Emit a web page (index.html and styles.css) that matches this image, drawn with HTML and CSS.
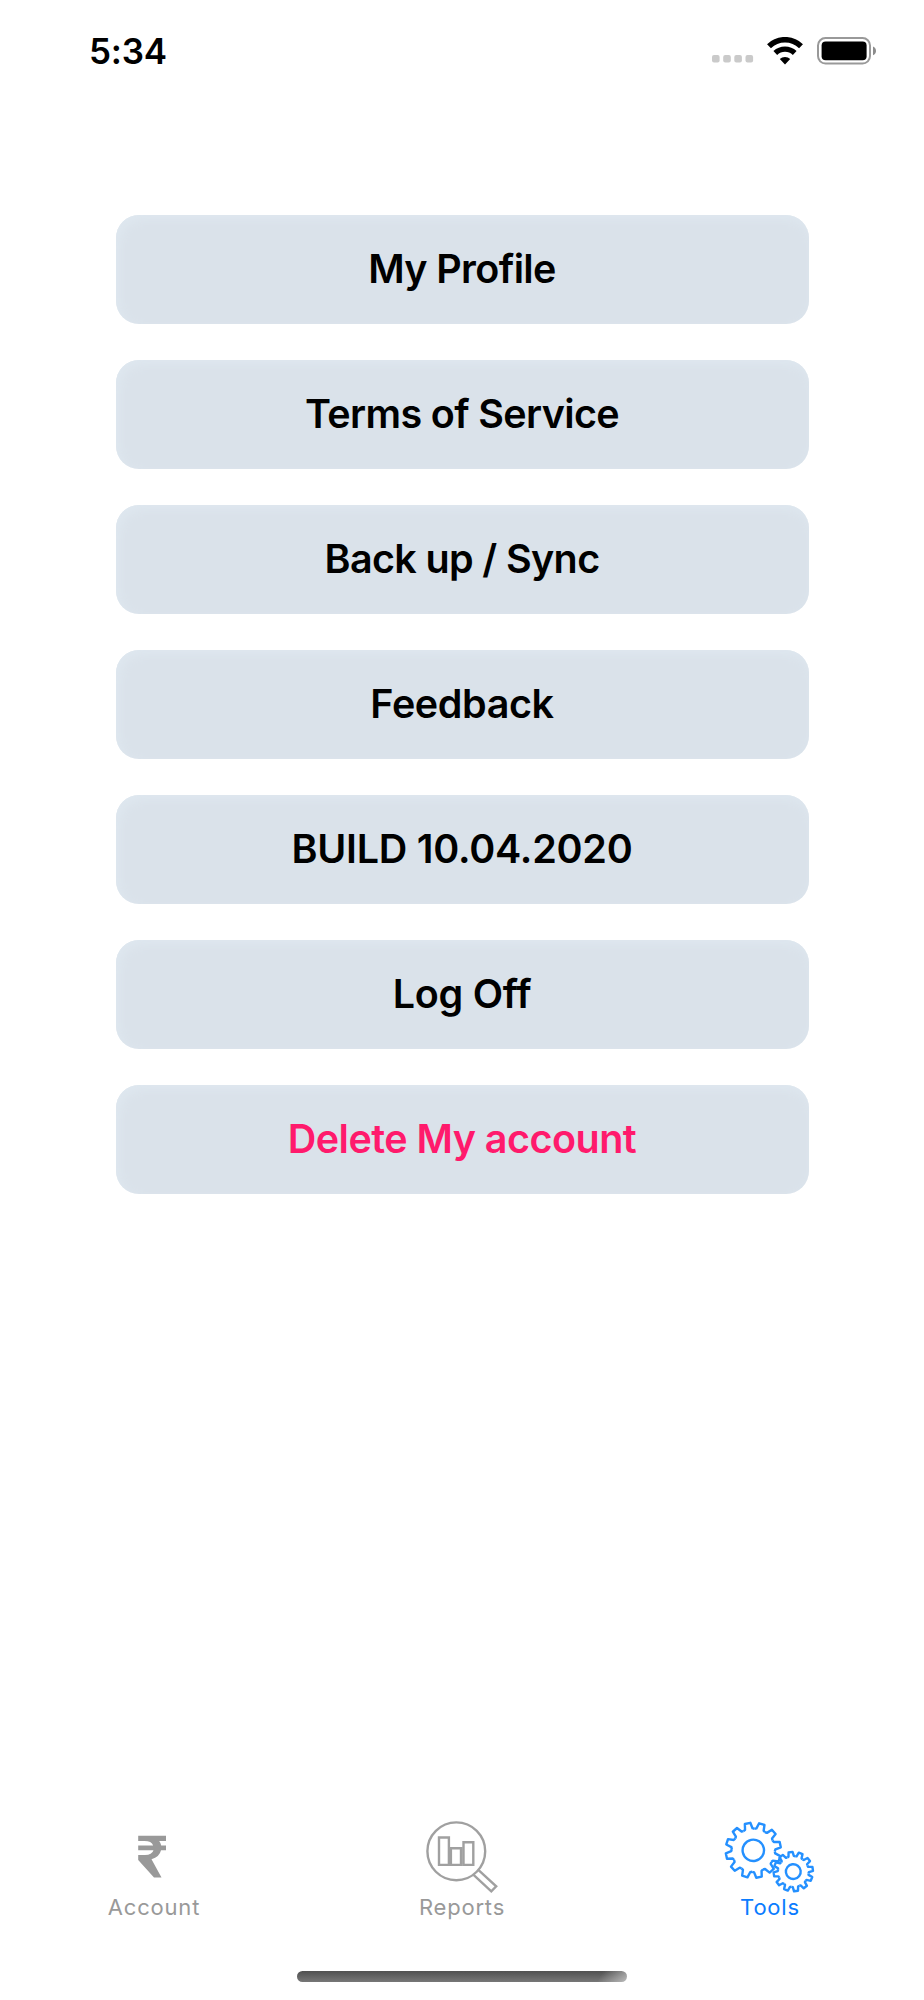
FILE: index.html
```html
<!DOCTYPE html>
<html lang="en">
<head>
<meta charset="utf-8">
<title>Tools</title>
<link rel="stylesheet" href="styles.css">
</head>
<body>
<div class="screen">
  <header class="status">
    <span class="time">5:34</span>
    <div class="indicators">
      <svg class="cell" width="42" height="8" viewBox="0 0 42 8" fill="#cacaca">
        <rect x="0" y="0" width="7.6" height="7.6" rx="2"/><rect x="11.2" y="0" width="7.6" height="7.6" rx="2"/><rect x="22.3" y="0" width="7.6" height="7.6" rx="2"/><rect x="33.5" y="0" width="7.6" height="7.6" rx="2"/>
      </svg>
      <svg class="wifi" width="36" height="28" viewBox="0 0 36 28">
        <path d="M2 9.2A23 23 0 0 1 34 9.2" fill="none" stroke="#000" stroke-width="5.6"/>
        <path d="M8.3 16A14 14 0 0 1 27.7 16" fill="none" stroke="#000" stroke-width="5.4"/>
        <path d="M18 27.4L12.8 22A7.6 7.6 0 0 1 23.2 22Z" fill="#000"/>
      </svg>
      <svg class="battery" width="60" height="28" viewBox="0 0 60 28">
        <rect x="1" y="1" width="52" height="25.6" rx="7.5" fill="none" stroke="#999" stroke-width="2"/>
        <rect x="4.6" y="4.6" width="45" height="18.6" rx="4" fill="#000"/>
        <path d="M56 9.4Q59 10.6 59 13.8T56 18.2Z" fill="#8c8c8c"/>
      </svg>
    </div>
  </header>

  <main class="menu">
    <button class="item profile">My Profile</button>
    <button class="item terms">Terms of Service</button>
    <button class="item backup">Back up / Sync</button>
    <button class="item feedback">Feedback</button>
    <button class="item build">BUILD 10.04.2020</button>
    <button class="item logoff">Log Off</button>
    <button class="item danger">Delete My account</button>
  </main>

  <nav class="tabs">
    <a class="tab">
      <svg class="icon" width="100" height="80" viewBox="0 0 100 80" fill="#999">
        <path d="M35.2 17.8H63V23H56.2Q57.7 25 58.2 27.4H63V32.3H58Q56.6 39 48.5 41.2L58.5 59.5H51L35.2 42V37H42Q49 37 50.5 32.3H35.2V27.4H50.2Q48.5 23 41.5 23H35.2Z"/>
      </svg>
      <span class="label">Account</span>
    </a>
    <a class="tab">
      <svg class="icon" width="100" height="80" viewBox="0 0 100 80" fill="none" stroke="#a0a0a0" stroke-width="2.4">
        <g transform="translate(1 .6)">
          <circle cx="44.3" cy="32.7" r="28.9"/>
          <path d="M27 18.9H36.9V46.3H27ZM38.9 29.7H49V46.3H38.9ZM51.5 23.7H61.3V46.3H51.5Z"/>
          <path d="M61.3 56L79.3 72.7L84.2 67.7L66.3 51.3"/>
        </g>
      </svg>
      <span class="label">Reports</span>
    </a>
    <a class="tab active">
      <svg class="icon" width="100" height="80" viewBox="0 0 100 80" fill="none" stroke="#2490ff" stroke-width="2.4" stroke-linejoin="round">
        <defs>
          <path id="big" d="M20.77 -5.57L21.8 -3.8L27.5 -2.8V2.8L21.8 3.8L20.77 5.57"/>
          <path id="small" d="M14.78 -3.96L15.4 -2.7L19.6 -2V2L15.4 2.7L14.78 3.96"/>
        </defs>
        <g transform="translate(34.3 32.3) rotate(-12)">
          <circle r="10.7"/>
          <use href="#big"/><use href="#big" transform="rotate(30)"/><use href="#big" transform="rotate(60)"/><use href="#big" transform="rotate(90)"/><use href="#big" transform="rotate(120)"/><use href="#big" transform="rotate(150)"/><use href="#big" transform="rotate(180)"/><use href="#big" transform="rotate(210)"/><use href="#big" transform="rotate(240)"/><use href="#big" transform="rotate(270)"/><use href="#big" transform="rotate(300)"/><use href="#big" transform="rotate(330)"/>
        </g>
        <g transform="translate(74.3 53.6) rotate(-8)">
          <circle r="15" fill="#fff" stroke="none"/>
          <circle r="7.4"/>
          <use href="#small"/><use href="#small" transform="rotate(30)"/><use href="#small" transform="rotate(60)"/><use href="#small" transform="rotate(90)"/><use href="#small" transform="rotate(120)"/><use href="#small" transform="rotate(150)"/><use href="#small" transform="rotate(180)"/><use href="#small" transform="rotate(210)"/><use href="#small" transform="rotate(240)"/><use href="#small" transform="rotate(270)"/><use href="#small" transform="rotate(300)"/><use href="#small" transform="rotate(330)"/>
        </g>
      </svg>
      <span class="label">Tools</span>
    </a>
  </nav>
  <div class="home"></div>
</div>
</body>
</html>
```

FILE: styles.css
```css
* { box-sizing: border-box; }
body {
  margin: 0;
  background: #fff;
  font-family: Inter, "Liberation Sans", sans-serif;
}
.screen {
  width: 924px;
  height: 2000px;
  display: flex;
  flex-direction: column;
  overflow: hidden;
}
.status {
  height: 102px;
  padding: 0 47px 0 89px;
  display: flex;
  justify-content: space-between;
  align-items: center;
}
.time {
  font-size: 35px;
  font-weight: 600;
  line-height: 40px;
  letter-spacing: -0.2px;
}
.indicators {
  display: flex;
  align-items: center;
  margin-top: -1px;
}
.cell { margin: 17px 13px 0 0; }
.wifi { margin-right: 14px; }
.menu {
  flex: 1;
  padding: 112.5px 115.5px 0;
  display: flex;
  flex-direction: column;
  gap: 36.1px;
}
.item {
  height: 109px;
  padding: 0 0 1px;
  border: 0;
  border-radius: 23px;
  background: #dae2ea;
  box-shadow: inset 3px 4px 12px #dfe8f0;
  color: #000;
  font: 600 39.5px/108px Inter, "Liberation Sans", sans-serif;
  letter-spacing: -0.64px;
  text-align: center;
  white-space: nowrap;
}
.feedback { letter-spacing: -0.4px; }
.build { letter-spacing: -0.24px; }
.logoff { letter-spacing: -0.28px; }
.danger { color: #ff1a6c; letter-spacing: -0.53px; }
.tabs {
  height: 152px;
  display: grid;
  grid-template-columns: repeat(3, 1fr);
}
.tab {
  display: flex;
  flex-direction: column;
  align-items: center;
  color: #999;
}
.icon { margin: -1px 2px 0 0; }
.label {
  margin-top: -5px;
  font-size: 22px;
  font-weight: 400;
  line-height: 28px;
  letter-spacing: 0.8px;
}
.active { color: #0a7cff; }
.home {
  width: 330px;
  height: 11px;
  margin: 0 auto 18px;
  border-radius: 6px;
  background:
    linear-gradient(120deg, transparent 91%, rgba(255, 255, 255, .5) 100%),
    linear-gradient(#505050, #777);
}
```
